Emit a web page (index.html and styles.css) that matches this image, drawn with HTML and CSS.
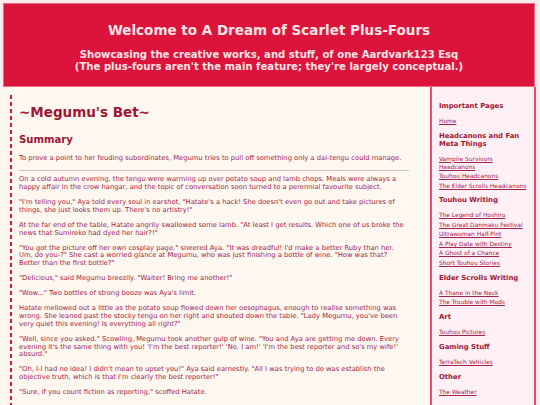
FILE: index.html
```html
<!DOCTYPE html>
<html lang="en">
<head>
<meta charset="utf-8">
<title>A Dream of Scarlet Plus-Fours</title>
<link rel="stylesheet" href="styles.css">
</head>
<body>
<header class="site-header">
  <h1 class="site-title">Welcome to A Dream of Scarlet Plus-Fours</h1>
  <p class="site-tagline">Showcasing the creative works, and stuff, of one Aardvark123 Esq<br>(The plus-fours aren't the main feature; they're largely conceptual.)</p>
</header>
<div class="layout">
  <main class="main">
    <article class="story">
      <h1 class="story-title">~Megumu's Bet~</h1>
      <h2 class="story-subtitle">Summary</h2>
      <p>To prove a point to her feuding subordinates, Megumu tries to pull off something only a dai-tengu could manage.</p>
      <hr class="rule">
      <p>On a cold autumn evening, the tengu were warming up over potato soup and lamb chops. Meals were always a happy affair in the crow hangar, and the topic of conversation soon turned to a perennial favourite subject.</p>
      <p>"I'm telling you," Aya told every soul in earshot, "Hatate's a hack! She doesn't even go out and take pictures of things, she just looks them up. There's no artistry!"</p>
      <p>At the far end of the table, Hatate angrily swallowed some lamb. "At least I get results. Which one of us broke the news that Sumireko had dyed her hair?!"</p>
      <p>"You got the picture off her own cosplay page," sneered Aya. "It was dreadful! I'd make a better Ruby than her. Um, do you-?" She cast a worried glance at Megumu, who was just finishing a bottle of wine. "How was that? Better than the first bottle?"</p>
      <p>"Delicious," said Megumu breezily. "Waiter! Bring me another!"</p>
      <p>"Wow..." Two bottles of strong booze was Aya's limit.</p>
      <p>Hatate mellowed out a little as the potato soup flowed down her oesophagus, enough to realise something was wrong. She leaned past the stocky tengu on her right and shouted down the table. "Lady Megumu, you've been very quiet this evening! Is everything all right?"</p>
      <p>"Well, since you asked." Scowling, Megumu took another gulp of wine. "You and Aya are getting me down. Every evening it's the same thing with you! 'I'm the best reporter!' 'No, I am!' 'I'm the best reporter and so's my wife!' absurd."</p>
      <p>"Oh, I-I had no idea! I didn't mean to upset you!" Aya said earnestly. "All I was trying to do was establish the objective truth, which is that I'm clearly the best reporter!"</p>
      <p>"Sure, if you count fiction as reporting," scoffed Hatate.</p>
    </article>
  </main>
  <aside class="sidebar">
    <section class="side-section">
      <h3 class="side-heading">Important Pages</h3>
      <ul class="side-links">
        <li><a href="#">Home</a></li>
      </ul>
    </section>
    <section class="side-section">
      <h3 class="side-heading">Headcanons and Fan Meta Things</h3>
      <ul class="side-links">
        <li><a href="#">Vampire Survivors Headcanons</a></li>
        <li><a href="#">Touhou Headcanons</a></li>
        <li><a href="#">The Elder Scrolls Headcanons</a></li>
      </ul>
    </section>
    <section class="side-section">
      <h3 class="side-heading">Touhou Writing</h3>
      <ul class="side-links">
        <li><a href="#">The Legend of Hoshiro</a></li>
        <li><a href="#">The Great Danmaku Festival</a></li>
        <li><a href="#">Ultrawoman Half-Pint</a></li>
        <li><a href="#">A Play Date with Destiny</a></li>
        <li><a href="#">A Ghost of a Chance</a></li>
        <li><a href="#">Short Touhou Stories</a></li>
      </ul>
    </section>
    <section class="side-section">
      <h3 class="side-heading">Elder Scrolls Writing</h3>
      <ul class="side-links">
        <li><a href="#">A Thane in the Neck</a></li>
        <li><a href="#">The Trouble with Mods</a></li>
      </ul>
    </section>
    <section class="side-section">
      <h3 class="side-heading">Art</h3>
      <ul class="side-links">
        <li><a href="#">Touhou Pictures</a></li>
      </ul>
    </section>
    <section class="side-section">
      <h3 class="side-heading">Gaming Stuff</h3>
      <ul class="side-links">
        <li><a href="#">TerraTech Vehicles</a></li>
      </ul>
    </section>
    <section class="side-section">
      <h3 class="side-heading">Other</h3>
      <ul class="side-links">
        <li><a href="#">The Weather</a></li>
      </ul>
    </section>
  </aside>
</div>
</body>
</html>
```
FILE: styles.css
```css
html, body {
  margin: 0;
  padding: 0;
}
body {
  background: #fdecef;
  font-family: "DejaVu Sans", Verdana, sans-serif;
  color: #a3234a;
}
.site-header {
  margin: 3px 5px 0 3px;
  border: 1px solid #ef6a82;
  background: #dc143c;
  color: #fde4e6;
  text-align: center;
  padding: 19px 0 13px;
}
.site-title {
  font-size: 13.5px;
  line-height: 15.7px;
  margin: 0 0 10px;
  font-weight: bold;
}
.site-tagline {
  font-size: 10.1px;
  line-height: 12px;
  font-weight: bold;
  margin: 0;
}
.layout {
  display: flex;
  align-items: stretch;
}
.main {
  flex: none;
  width: 430px;
  box-sizing: border-box;
  background: #fff8f0;
  padding: 8px 21px 0 10px;
}
.story {
  display: flow-root;
  padding: 0 0 30px 9px;
  background: repeating-linear-gradient(to bottom, #dc143c 0, #dc143c 4px, transparent 4px, transparent 7px) left top / 2px 100% no-repeat;
}
.story-title {
  font-size: 13.5px;
  line-height: 15.7px;
  margin: 9.8px 0 13.4px;
  color: #a01434;
}
.story-subtitle {
  font-size: 10.1px;
  line-height: 11.8px;
  margin: 0 0 9.7px;
  color: #a01434;
}
.story p {
  font-size: 6.75px;
  line-height: 7.8px;
  margin: 0 0 7.2px;
}
.rule {
  height: 0;
  border: 0;
  border-top: 1px solid #cdbfbf;
  margin: 0 0 5.2px;
}
.sidebar {
  flex: none;
  width: 106px;
  box-sizing: border-box;
  border-left: 2px solid #e0506c;
  border-right: 2px solid #e0506c;
  background: #fff0f5;
  padding: 15px 6px 30px 7px;
  font-size: 5.9px;
}
.side-section {
  margin: 0 0 6.9px;
}
.side-heading {
  font-size: 6.86px;
  line-height: 8px;
  margin: 0 0 7px;
  color: #a01434;
}
.side-links {
  list-style: none;
  margin: 0;
  padding: 0;
}
.side-links li {
  line-height: 8px;
  margin: 0 0 1.5px;
}
.side-links a {
  color: #a3234a;
  text-decoration: underline;
}
```
